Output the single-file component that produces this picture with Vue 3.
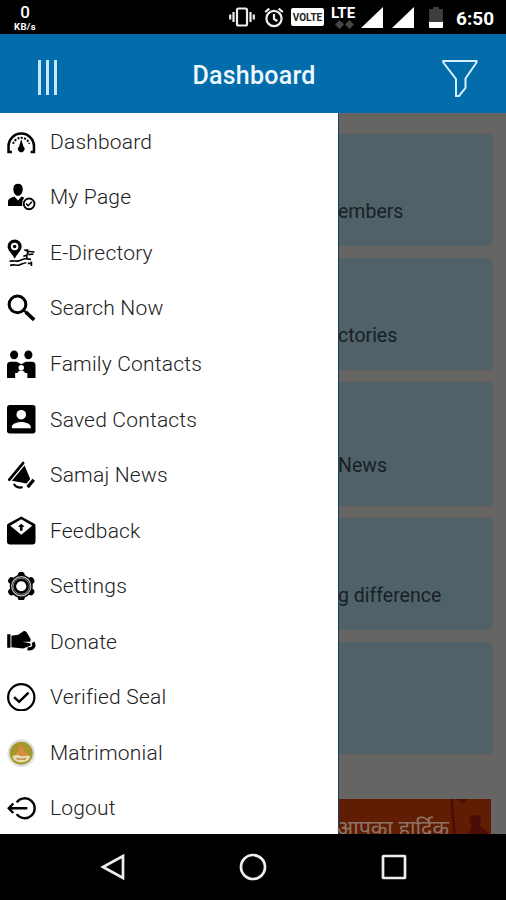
<template>
  <div class="phone">
    <div class="status-bar">
      <div class="speed">
        <b>0</b>
        <span>KB/s</span>
      </div>
      <div class="status-icons">
        <svg class="vibrate" width="26" height="20" viewBox="0 0 26 20">
          <rect x="8" y="1.5" width="10" height="17" rx="1.5" />
          <path d="M4.5 5v10M1.2 7.5v5M21.5 5v10M24.8 7.5v5" />
        </svg>
        <svg class="alarm" width="20" height="21" viewBox="0 0 20 21">
          <circle cx="10" cy="11.5" r="7.6" />
          <path d="M10 7v5l3.400 2M1.200 5L5.300 1.600M18.800 5l-4.100-3.400" />
        </svg>
        <span class="volte">VOLTE</span>
        <div class="lte">
          <span>LTE</span>
          <svg width="19" height="9" viewBox="0 0 19 9">
            <path d="M4.500 0L9 4.500 4.500 9 0 4.500zM14.500 0L19 4.500 14.500 9 10 4.500z" />
          </svg>
        </div>
        <svg class="signal" width="22" height="21" viewBox="0 0 22 21"><path d="M22 0v21H0z" /></svg>
        <svg class="signal second" width="22" height="21" viewBox="0 0 22 21"><path d="M22 0v21H0z" /></svg>
        <svg class="battery" width="14" height="21" viewBox="0 0 14 21">
          <path fill="#3d3d3d" d="M0 3q0-1 1-1h3V0h6v2h3q1 0 1 1v12H0z" />
          <path fill="#fff" d="M0 15h14v5q0 1-1 1H1q-1 0-1-1z" />
        </svg>
        <span class="clock">6:50</span>
      </div>
    </div>

    <header class="app-bar">
      <button class="menu-btn"><i /><i /><i /></button>
      <h1>Dashboard</h1>
      <button class="filter-btn">
        <svg width="36" height="39" viewBox="0 0 36 39">
          <path d="M1.300 2H34.500V3.500L23.500 19.500V29L17 37H14V20L1.300 3.500z" />
        </svg>
      </button>
    </header>

    <main class="body">
      <nav class="drawer">
        <a v-for="item in menu" :key="item.label" class="menu-item">
          <svg class="menu-icon" viewBox="0 0 28 28">
            <template v-if="item.icon === 'gauge'">
              <path class="line" stroke-width="2.500" d="M4.800 23.500H1.500v-5.500a12.500 12.500 0 0 1 25 0v5.500h-3.300" />
              <path class="line" stroke-width="2" stroke-dasharray="2 1.300" d="M6 15.500a8.400 8.400 0 0 1 16 0" />
              <path d="M14 11l2.200 7.200a3.200 3.200 0 1 1-4.400 0z" />
            </template>
            <template v-else-if="item.icon === 'person'">
              <path d="M6.200 5.800C6.200 2.500 8 .8 10.800.8s4.700 1.700 4.700 5-1.800 6.800-4.700 6.800-4.600-3.500-4.600-6.800z" />
              <path d="M1 22.500v-4c0-2.800 2.500-3.800 6.300-5.200l3.500 4 3.500-4 2.800 1.100c-2 2-2.800 5-2 8.100z" />
              <circle class="line" cx="21.700" cy="20.500" r="5.300" stroke-width="1.800" />
              <path class="line" stroke-width="1.500" d="M18.800 20.300l2 2 3.700-3.800" />
            </template>
            <template v-else-if="item.icon === 'map'">
              <path fill-rule="evenodd" d="M7.500.5a6.900 6.900 0 0 1 6.900 6.900c0 4.200-4.700 7.200-6.900 12C5.300 14.600.6 11.600.6 7.400A6.900 6.900 0 0 1 7.500.5zm0 3.200a3.700 3.700 0 1 0 0 7.400 3.700 3.700 0 0 0 0-7.400z" />
              <circle cx="7.500" cy="7.400" r="1.800" />
              <path class="line" stroke-width="1.600" d="M2.500 22c3-1.500 6 .5 9-.5s5-2.500 8-2l4 .5M3 26c3-1.500 6 .5 9-.5s4-2 7-2.200M17 10.500l4 1.500-1.500 4-3.500 1M20 12l7 .8M21 15.300l5-.6M20 10v3M19.500 17v3M24 22v4.500M20.500 24h4" />
            </template>
            <template v-else-if="item.icon === 'search'">
              <circle class="line" cx="10.300" cy="10.200" r="8.200" stroke-width="3" />
              <path class="line" stroke-width="3.600" d="M18.500 17.900l8.200 7.500" />
              <path class="line" stroke-width="2" d="M16 15.600l3 2.700" />
            </template>
            <template v-else-if="item.icon === 'family'">
              <ellipse cx="7" cy="4.700" rx="4" ry="4.300" />
              <ellipse cx="21" cy="4.700" rx="4" ry="4.300" />
              <path d="M0 27V15q0-3.500 3.500-3.500h6L14 14l4.500-2.500h6Q28 11.500 28 15v12q0 .7-.7.700H20v-5H8v5H.7q-.7 0-.7-.7z" />
              <circle cx="14" cy="17.500" r="2.700" fill="#fff" />
              <path fill="#fff" d="M10 24c0-5 8-5 8 0z" />
            </template>
            <template v-else-if="item.icon === 'contact'">
              <rect width="28" height="28" rx="2.600" />
              <circle cx="14" cy="9.500" r="4.700" fill="#fff" />
              <path fill="#fff" d="M4.700 22.800v-1.500c0-3 6-4.600 9.300-4.600s9.300 1.600 9.300 4.600v1.500z" />
            </template>
            <template v-else-if="item.icon === 'horn'">
              <path class="line" stroke-width="2.700" stroke-linecap="round" d="M2.300 18.300L15.800 2" />
              <path d="M4.800 19.500L17.300 4.500l5.500 13.300-3.500 4.200z" />
              <path class="line" stroke-width="3.200" d="M20.300 25.700l6-7.200" />
              <path class="line" stroke-width="2.200" d="M6.800 22.500c1.500 3.300 5.500 4.300 8.500 3" />
            </template>
            <template v-else-if="item.icon === 'mail'">
              <path fill-rule="evenodd" d="M14 .5L27 7.500Q28 8 28 9.200V25q0 3-3 3H3q-3 0-3-3V9.200Q0 8 1 7.500zM14 3.300L3.200 9.500 14 18.500l10.800-9z" />
              <path d="M14 7.500l3.200 2.800-1.900.5v3.700h-2.600v-3.700l-1.900-.5z" />
            </template>
            <template v-else-if="item.icon === 'gear'">
              <circle
                v-for="n in 6"
                :key="n"
                cx="14"
                cy="3.200"
                r="3.500"
                :transform="`rotate(${n * 60} 14 14)`"
              />
              <circle cx="14" cy="14" r="11.300" />
              <circle class="line ring" cx="14" cy="14" r="9.400" stroke-width="1.200" />
              <circle cx="14" cy="14" r="5" fill="#fff" />
              <circle class="line ring" cx="14" cy="14" r="7.900" stroke-width=".7" />
            </template>
            <template v-else-if="item.icon === 'hand'">
              <path d="M.2 7h3.200v13.500H.2zM4.300 8.500l6.700-1 5.500-3.500q1.800-.5 3 1.500l3.800 6.500-.5 2.500h-7.500l7 1.500 1.500 2-3.500 1.500-4.500 1.500-11.500-1z" />
              <path class="line" stroke-width="3.200" d="M25.500 15c2.300 4-.3 7.300-5.300 6.300" />
            </template>
            <template v-else-if="item.icon === 'check'">
              <circle class="line" cx="14" cy="14" r="12.900" stroke-width="2.200" />
              <path class="line" stroke-width="2.500" d="M7 13.800l4.900 4.700 9.300-9" />
            </template>
            <template v-else-if="item.icon === 'emblem'">
              <circle cx="14" cy="14" r="13.500" fill="#dedede" />
              <circle cx="14" cy="14" r="11.300" fill="#a59729" />
              <path fill="#e5dbb0" d="M5 17l5-2 4 2 5-2 4 2.500c-1 3.500-5 5.500-9 5.500s-8-2-9-6z" />
              <path fill="#dd8a3d" d="M12 6l4 2 1 4 4 4-5 1-3-2-5 1 3-4z" />
              <path fill="#b98548" d="M9 18.500l5 1 5-1-1 1.800h-8z" />
            </template>
            <template v-else>
              <path class="line" stroke-width="2.300" d="M9.500 8.200a9.800 9.800 0 1 1 0 11.600M1.500 14H20" />
              <path class="line" stroke-width="2.300" d="M6.200 9.300L1.700 14l4.500 4.700" />
            </template>
          </svg>
          <span>{{ item.label }}</span>
        </a>
      </nav>

      <section class="content">
        <div v-for="(card, i) in cards" :key="i" class="card" :class="card.size">
          {{ card.text }}
        </div>
        <div class="banner">
          <svg width="42" height="36" viewBox="0 0 42 36">
            <path d="M1 0h3l3 36H4zM8 0h11l-5 5zM19 36l4-9c-5-5-2-11 3-11 6 0 8 6 4 11l7 4 3 5z" />
          </svg>
          <span>आपका हार्दिक</span>
        </div>
      </section>
    </main>

    <footer class="nav-bar">
      <svg viewBox="0 0 28 28"><path d="M24 3v22L4 14z" /></svg>
      <svg viewBox="0 0 28 28"><circle cx="14" cy="14" r="12" /></svg>
      <svg viewBox="0 0 28 28"><rect x="3" y="3" width="22" height="22" rx=".5" /></svg>
    </footer>
  </div>
</template>

<script setup>
const menu = [
  { label: "Dashboard", icon: "gauge" },
  { label: "My Page", icon: "person" },
  { label: "E-Directory", icon: "map" },
  { label: "Search Now", icon: "search" },
  { label: "Family Contacts", icon: "family" },
  { label: "Saved Contacts", icon: "contact" },
  { label: "Samaj News", icon: "horn" },
  { label: "Feedback", icon: "mail" },
  { label: "Settings", icon: "gear" },
  { label: "Donate", icon: "hand" },
  { label: "Verified Seal", icon: "check" },
  { label: "Matrimonial", icon: "emblem" },
  { label: "Logout", icon: "logout" }
]

const cards = [
  { text: "embers" },
  { text: "ctories" },
  { text: "News", size: "tall" },
  { text: "g difference" },
  { text: "" }
]
</script>

<style>
body {
  margin: 0;
  background: #000;
}
</style>

<style scoped>
.phone {
  width: 506px;
  height: 900px;
  display: flex;
  flex-direction: column;
  overflow: hidden;
  background: #000;
  font-family: Roboto, "Liberation Sans", sans-serif;
}

.status-bar {
  height: 34px;
  flex: none;
  display: flex;
  justify-content: space-between;
  color: #fff;
}

.speed {
  width: 26px;
  margin-left: 12px;
  padding-top: 3px;
  display: flex;
  flex-direction: column;
  align-items: center;
}

.speed b {
  font-size: 17px;
  line-height: 18px;
  font-weight: 500;
}

.speed span {
  font-size: 9.5px;
  line-height: 11px;
  font-weight: 700;
  letter-spacing: 0.4px;
}

.status-icons {
  display: flex;
  align-items: flex-start;
  padding: 7px 11px 0 0;
}

.vibrate,
.alarm {
  fill: none;
  stroke: #eee;
  stroke-width: 2.2;
}

.alarm {
  margin-left: 9px;
}

.volte {
  width: 33px;
  height: 18px;
  margin: 1px 0 0 7px;
  border-radius: 2px;
  background: #fff;
  color: #222;
  font: 700 10px/19px Roboto, sans-serif;
  text-align: center;
}

.lte {
  width: 26px;
  margin-left: 6px;
  display: flex;
  flex-direction: column;
  align-items: center;
}

.lte span {
  font-size: 15px;
  line-height: 13px;
  font-weight: 700;
}

.lte svg {
  margin-left: 2px;
  fill: #454545;
}

.signal {
  margin-left: 5px;
  fill: #fff;
}

.signal.second {
  margin-left: 9px;
}

.battery {
  margin-left: 15px;
}

.clock {
  width: 39px;
  margin-left: 13px;
  font-size: 19px;
  line-height: 23px;
  font-weight: 700;
}

.app-bar {
  height: 78.5px;
  flex: none;
  display: flex;
  align-items: center;
  justify-content: space-between;
  padding: 0 28px 0 38px;
  box-sizing: border-box;
  background: #036dab;
}

.app-bar h1 {
  margin: 0;
  padding: 5px 8px 0 0;
  color: #eef8ff;
  font-size: 25px;
  line-height: 30px;
  font-weight: 500;
  letter-spacing: 0.25px;
}

.menu-btn,
.filter-btn {
  width: 36px;
  padding: 0;
  border: none;
  background: none;
  display: flex;
}

.menu-btn {
  gap: 5.5px;
  padding-top: 9px;
}

.menu-btn i {
  width: 2.5px;
  height: 35px;
  background: #c6e7fb;
}

.filter-btn {
  padding-top: 11px;
}

.filter-btn svg {
  fill: none;
  stroke: #d5efff;
  stroke-width: 2;
}

.body {
  flex: 1;
  min-height: 0;
  display: flex;
  overflow: hidden;
  background: #666564;
}

.drawer {
  width: 338px;
  flex: none;
  padding-top: 1.5px;
  box-sizing: border-box;
  overflow: hidden;
  background: #fff;
}

.menu-item {
  height: 55.55px;
  padding-left: 7px;
  display: flex;
  align-items: center;
  gap: 14.5px;
  color: #222;
  font-size: 21px;
  font-weight: 300;
  letter-spacing: 0.2px;
  white-space: nowrap;
}

.menu-icon {
  width: 28.5px;
  height: 28.5px;
  flex: none;
  fill: #000;
}

.menu-icon .line {
  fill: none;
  stroke: #000;
}

.menu-icon .ring {
  stroke: #bbb;
}

.content {
  flex: 1;
  min-width: 0;
  display: flex;
  flex-direction: column;
  gap: 12px;
  padding: 21.5px 13px 0 0;
  box-shadow: inset 1px 0 #164258;
}

.card {
  height: 112px;
  flex: none;
  margin-left: 1px;
  padding-top: 64px;
  box-sizing: border-box;
  border-radius: 0 5px 5px 0;
  background: #506167;
  color: #172027;
  font-size: 19.5px;
  line-height: 28px;
  text-indent: -1px;
  white-space: nowrap;
}

.card.tall {
  height: 124px;
  padding-top: 70px;
}

.banner {
  height: 60px;
  flex: none;
  display: flex;
  flex-direction: row-reverse;
  justify-content: space-between;
  margin: 32.5px 2px 0 1px;
  background: #611d03;
  color: #8d7467;
  font-family: "Noto Sans", "Noto Sans Devanagari", sans-serif;
  font-size: 21.5px;
  line-height: 57px;
  white-space: nowrap;
}

.banner svg {
  flex: none;
  fill: #4b0e05;
}

.nav-bar {
  height: 66.5px;
  flex: none;
  display: flex;
  align-items: center;
  justify-content: center;
  gap: 112.5px;
  background: #000;
}

.nav-bar svg {
  width: 28px;
  height: 28px;
  fill: none;
  stroke: #eee;
  stroke-width: 2.7;
}
</style>
